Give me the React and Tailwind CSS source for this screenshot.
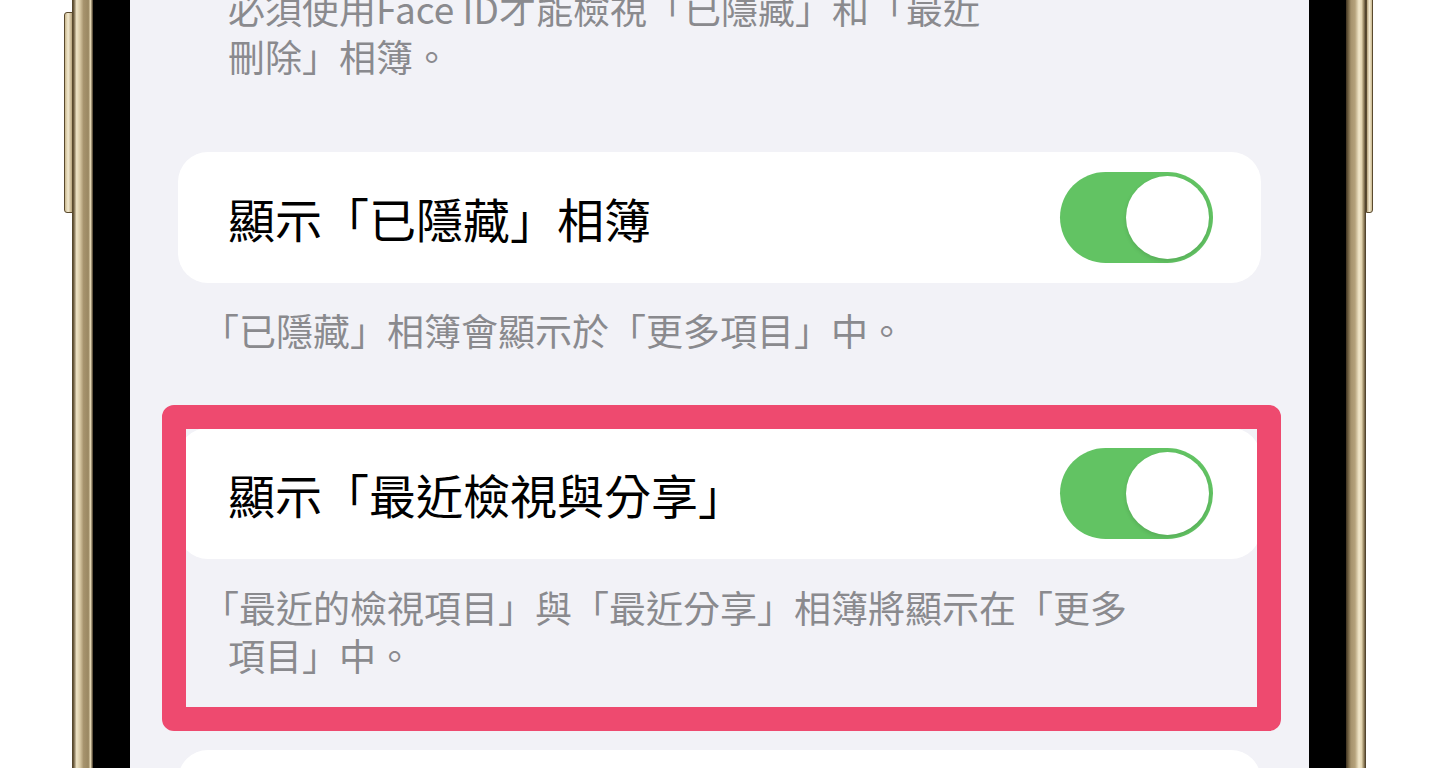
const Toggle = () => (
  <div className="w-[153px] h-[91px] rounded-full bg-[#62c363] p-[4px] flex justify-end items-center shrink-0">
    <div className="size-[83px] rounded-full bg-white shadow-[0_2px_4px_rgba(0,0,0,0.12)]" />
  </div>
);

const SettingRow = ({ label }) => (
  <div className="h-[131px] bg-white rounded-[30px] flex items-center justify-between pl-[50px] pr-[48px]">
    <span className="text-[47px] leading-none text-black whitespace-nowrap">{label}</span>
    <Toggle />
  </div>
);

const Footer = ({ children, className = '' }) => (
  <p className={`pl-[50px] text-[37px] leading-[48px] text-[#8a8a8e] whitespace-nowrap ${className}`}>
    {children}
  </p>
);

export default function App() {
  return (
    <div className="h-[768px] w-full flex overflow-hidden bg-white font-['Noto_Sans_CJK_TC','Noto_Sans',sans-serif]">
      {/* left side + button */}
      <div className="w-[72px] relative shrink-0">
        <div className="absolute right-[-1px] top-[12px] w-[9px] h-[201px] rounded-l-[3px] border border-[#5a4a2e] bg-[linear-gradient(90deg,#c9b88f_0%,#f3ead0_45%,#b7a47c_100%)]" />
      </div>
      {/* left frame */}
      <div className="w-[21px] shrink-0 bg-[linear-gradient(90deg,#4d3f27_0%,#6d5c3e_8%,#efe4c6_22%,#d8c9a4_38%,#a6936d_55%,#9a8862_78%,#e6d8b4_88%,#3f3321_100%)]" />
      <div className="w-[37px] shrink-0 bg-black" />

      {/* screen */}
      <div className="w-[1179px] shrink-0 bg-[#f2f2f7] px-12 overflow-hidden">
        <Footer className="-mt-[16px]">
          必須使用Face ID才能檢視「已隱藏」和「最近
          <br />
          刪除」相簿。
        </Footer>

        <div className="mt-[72px]">
          <SettingRow label="顯示「已隱藏」相簿" />
        </div>
        <Footer className="mt-[23px] indent-[-0.7em]">「已隱藏」相簿會顯示於「更多項目」中。</Footer>

        <div className="relative mt-[74px]">
          <SettingRow label="顯示「最近檢視與分享」" />
          <Footer className="mt-[24px] indent-[-0.7em]">
            「最近的檢視項目」與「最近分享」相簿將顯示在「更多
            <br />
            項目」中。
          </Footer>
          {/* highlight */}
          <div className="absolute -top-[23px] -left-[16px] -right-[20px] -bottom-[52px] border-[24px] border-[#ee4a6f] rounded-[12px] pointer-events-none" />
        </div>

        <div className="mt-[71px] h-[131px] bg-white rounded-[30px]" />
      </div>

      {/* right frame */}
      <div className="w-[37px] shrink-0 bg-black" />
      <div className="w-[20px] shrink-0 bg-[linear-gradient(90deg,#3f3321_0%,#6a5a3c_10%,#a6936d_25%,#b5a27b_45%,#f2e8cb_65%,#e3d5b0_78%,#8f7d59_90%,#3f3321_100%)]" />
      <div className="flex-1 relative">
        <div className="absolute left-0 -top-[10px] w-[7px] h-[223px] rounded-r-[3px] border border-[#5a4a2e] bg-[linear-gradient(90deg,#b7a47c_0%,#f3ead0_50%,#c9b88f_100%)]" />
      </div>
    </div>
  );
}
